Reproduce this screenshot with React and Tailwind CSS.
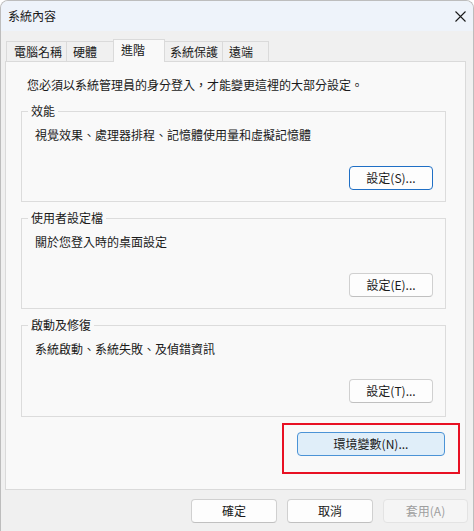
import React from "react";

const font = "font-['Noto_Sans_CJK_TC','Noto_Sans',sans-serif]";

const tabs = [
  { label: "電腦名稱", w: "w-[61px]", pl: "pl-[7px]" },
  { label: "硬體", w: "w-[48px]", pl: "pl-[6px]" },
  { label: "進階", w: "w-[52px]", pl: "pl-[7px]", active: true },
  { label: "系統保護", w: "w-[59px]", pl: "pl-[5px]" },
  { label: "遠端", w: "w-[47px]", pl: "pl-[6px]" },
];

const groups = [
  { title: "效能", desc: "視覺效果、處理器排程、記憶體使用量和虛擬記憶體", btn: "設定(S)...", primary: true, h: "h-[91px]", mb: "mb-[11px]" },
  { title: "使用者設定檔", desc: "關於您登入時的桌面設定", btn: "設定(E)...", h: "h-[91px]", mb: "mb-[11px]" },
  { title: "啟動及修復", desc: "系統啟動、系統失敗、及偵錯資訊", btn: "設定(T)...", h: "h-[92px]", mb: "mb-[13px]" },
];

const Button = ({ children, variant, className = "" }) => {
  const look =
    variant === "primary"
      ? "bg-[#fdfdfd] border-[#1f6fc5]"
      : variant === "hover"
      ? "bg-[#e0eef9] border-[#4b93d6]"
      : variant === "disabled"
      ? "bg-[#f5f5f5] border-[#e3e3e3] text-[#9e9e9e]"
      : "bg-[#fdfdfd] border-[#d0d0d0] border-b-[#c0c0c0]";
  return (
    <div
      className={`flex items-center justify-center rounded-[4px] border leading-[16px] ${look} ${className}`}
    >
      {children}
    </div>
  );
};

const GroupBox = ({ title, desc, btn, primary, h, mb }) => (
  <div className={`flex flex-col border border-[#dcdcdc] ${h}`}>
    <span className="-mt-[9px] ml-[6px] w-fit bg-[#f9f9f9] px-[3px] leading-[16px]">
      {title}
    </span>
    <span className="ml-[13px] mt-[8px] leading-[16px]">{desc}</span>
    <Button
      variant={primary ? "primary" : undefined}
      className={`${mb} mr-[12px] mt-auto h-[24px] w-[84px] self-end`}
    >
      {btn}
    </Button>
  </div>
);

export default function App() {
  return (
    <div
      className={`flex h-[531px] w-[474px] flex-col overflow-hidden rounded-t-[8px] border-x border-t border-[#bdbdbd] bg-[#f0f0f0] text-[12px] text-[#1a1a1a] ${font}`}
    >
      <div className="flex h-[30px] shrink-0 items-center justify-between bg-[#eef3fa] pl-[7px] pr-[7px]">
        <span className="leading-[16px]">系統內容</span>
        <svg width="11" height="11" viewBox="0 0 11 11" className="text-[#1a1a1a]">
          <path d="M0.5 0.5 L10.5 10.5 M10.5 0.5 L0.5 10.5" stroke="currentColor" strokeWidth="1.1" />
        </svg>
      </div>

      <div className="relative z-10 -mb-px ml-[5px] mt-[8px] flex h-[23px] items-end">
        {tabs.map((t, i) =>
          t.active ? (
            <div
              key={t.label}
              className={`${t.w} ${t.pl} -ml-px h-[23px] border-x border-t border-[#dadada] bg-[#f9f9f9] pt-[2px] leading-[16px]`}
            >
              {t.label}
            </div>
          ) : (
            <div
              key={t.label}
              className={`${t.w} ${t.pl} ${i > 0 ? "-ml-px" : ""} h-[21px] border border-[#dadada] bg-[#f0f0f0] pt-[2px] leading-[16px]`}
            >
              {t.label}
            </div>
          )
        )}
      </div>

      <div className="ml-[4px] flex h-[429px] w-[461px] flex-col border border-[#dadada] bg-[#f9f9f9] pl-[15px] pr-[19px] pt-[15px]">
        <span className="ml-[6px] leading-[16px]">
          您必須以系統管理員的身分登入，才能變更這裡的大部分設定。
        </span>
        <div className="mt-[18px] flex flex-col gap-[16px]">
          {groups.map((g) => (
            <GroupBox key={g.title} {...g} />
          ))}
        </div>
        <div className="-mr-[14px] mt-[6px] h-[51px] w-[178px] self-end border-2 border-[#e81123] pl-[13px] pt-[7px]">
          <Button variant="hover" className="h-[24px] w-[148px]">
            環境變數(N)...
          </Button>
        </div>
      </div>

      <div className="mt-[9px] flex justify-end gap-[10px] pr-[5px]">
        <Button className="h-[24px] w-[86px]">確定</Button>
        <Button className="h-[24px] w-[86px]">取消</Button>
        <Button variant="disabled" className="h-[24px] w-[85px]">
          套用(A)
        </Button>
      </div>
    </div>
  );
}
